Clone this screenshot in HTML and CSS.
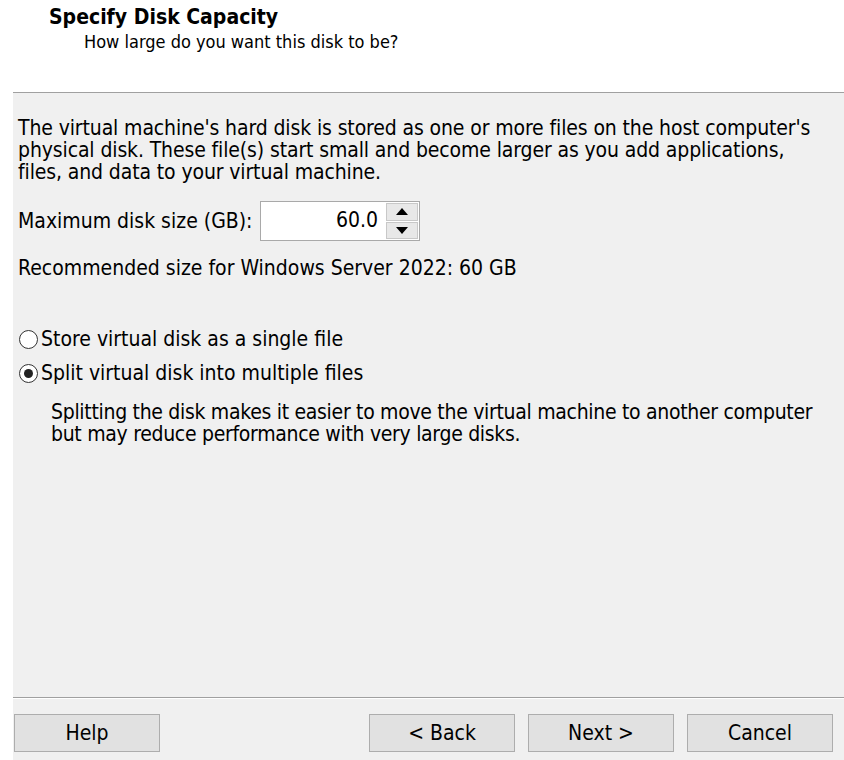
FILE: index.html
```html
<!DOCTYPE html>
<html>
<head>
<meta charset="utf-8">
<link rel="stylesheet" href="styles.css">
</head>
<body>
<div class="dialog">
  <header class="head">
    <div class="title">Specify Disk Capacity</div>
    <div class="subtitle">How large do you want this disk to be?</div>
  </header>
  <div class="panel">
    <main class="content">
      <p class="intro">The virtual machine's hard disk is stored as one or more files on the host computer's<br>physical disk. These file(s) start small and become larger as you add applications,<br>files, and data to your virtual machine.</p>
      <div class="size-row">
        <span class="label">Maximum disk size (GB):</span>
        <div class="spin">
          <div class="spin-value">60.0</div>
          <div class="spin-btns">
            <div class="spin-btn"><svg width="12" height="7" viewBox="0 0 12 7"><polygon points="6,0 12,7 0,7" fill="#000"/></svg></div>
            <div class="spin-btn"><svg width="12" height="7" viewBox="0 0 12 7"><polygon points="0,0 12,0 6,7" fill="#000"/></svg></div>
          </div>
        </div>
      </div>
      <p class="recommend">Recommended size for Windows Server 2022: 60 GB</p>
      <div class="radio-row first">
        <span class="radio"></span>
        <span>Store virtual disk as a single file</span>
      </div>
      <div class="radio-row second">
        <span class="radio checked"></span>
        <span>Split virtual disk into multiple files</span>
      </div>
      <p class="desc">Splitting the disk makes it easier to move the virtual machine to another computer<br>but may reduce performance with very large disks.</p>
    </main>
    <footer class="foot">
      <button class="btn">Help</button>
      <div class="spacer"></div>
      <button class="btn">&lt; Back</button>
      <button class="btn">Next &gt;</button>
      <button class="btn">Cancel</button>
    </footer>
  </div>
</div>
</body>
</html>
```

FILE: styles.css
```css
html, body {
  margin: 0;
  padding: 0;
  background: #ffffff;
}
body {
  font-family: "DejaVu Sans Condensed", "DejaVu Sans", sans-serif;
  font-size: 21px;
  color: #000;
  width: 844px;
  height: 760px;
  overflow: hidden;
}
.dialog {
  display: flex;
  flex-direction: column;
  height: 760px;
}
.head {
  height: 92px;
  box-sizing: border-box;
  padding: 6px 0 0 49px;
  background: #ffffff;
}
.title {
  font-weight: bold;
  line-height: 22px;
}
.subtitle {
  font-size: 18px;
  line-height: 22px;
  margin-top: 3px;
  padding-left: 35px;
}
.panel {
  flex: 1;
  margin-left: 13px;
  background: #f0f0f0;
  border-top: 1px solid #a0a0a0;
  display: flex;
  flex-direction: column;
}
.content {
  flex: 1;
  padding: 24px 0 0 5px;
  line-height: 22px;
  white-space: nowrap;
}
.intro {
  margin: 0;
  letter-spacing: -0.12px;
}
.size-row {
  display: flex;
  align-items: center;
  margin-top: 18px;
  height: 40px;
}
.label {
  width: 242px;
}
.spin {
  display: flex;
  height: 40px;
  width: 160px;
  box-sizing: border-box;
  border: 1px solid #a9a9a9;
  background: #fff;
}
.spin-value {
  flex: 1;
  text-align: right;
  padding-right: 8px;
  line-height: 36px;
}
.spin-btns {
  width: 32px;
  display: flex;
  flex-direction: column;
  gap: 1px;
  padding: 1px 1px 1px 0;
}
.spin-btn {
  flex: 1;
  background: #e8e8e8;
  border: 1px solid #c8c8c8;
  display: flex;
  align-items: center;
  justify-content: center;
}
.recommend {
  margin: 16px 0 0 0;
}
.radio-row {
  display: flex;
  align-items: center;
  gap: 3px;
  height: 22px;
  padding-left: 1px;
}
.radio-row.first {
  margin-top: 49px;
}
.radio-row.second {
  margin-top: 12px;
}
.radio {
  width: 19px;
  height: 19px;
  box-sizing: border-box;
  border: 1px solid #333;
  border-radius: 50%;
  background: #fff;
  display: flex;
  align-items: center;
  justify-content: center;
}
.radio.checked::after {
  content: "";
  width: 9px;
  height: 9px;
  border-radius: 50%;
  background: #222;
}
.desc {
  margin: 17px 0 0 33px;
  letter-spacing: -0.3px;
}
.foot {
  border-top: 1px solid #a0a0a0;
  box-shadow: inset 0 1px 0 #ffffff;
  height: 63px;
  box-sizing: border-box;
  padding: 16px 11px 0 1px;
  display: flex;
  gap: 13px;
}
.spacer {
  flex: 1;
}
.btn {
  width: 146px;
  height: 38px;
  background: #e1e1e1;
  border: 1px solid #adadad;
  font-family: inherit;
  font-size: 21px;
  color: #000;
  padding: 0;
}
```
